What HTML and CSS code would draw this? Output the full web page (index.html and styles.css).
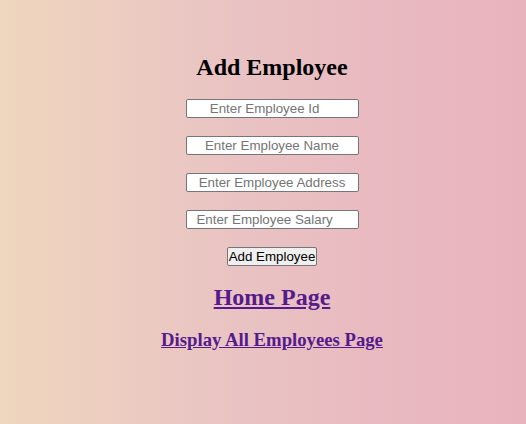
FILE: index.html
```html
<!DOCTYPE html>
<html>
<head>
<meta charset="utf-8">
<link rel="stylesheet" href="styles.css">
</head>
<body>
<div class="page">
  <h2 class="title">Add Employee</h2>
  <form class="form">
    <input class="field" type="text" placeholder="Enter Employee Id    ">
    <input class="field" type="text" placeholder="Enter Employee Name">
    <input class="field" type="text" placeholder="Enter Employee Address">
    <input class="field" type="text" placeholder="Enter Employee Salary    ">
    <button class="btn" type="button">Add Employee</button>
  </form>
  <h2 class="link-big"><a href="#">Home Page</a></h2>
  <h3 class="link-small"><a href="#">Display All Employees Page</a></h3>
</div>
</body>
</html>
```
FILE: styles.css
```css
html, body {
  height: 100%;
}
body {
  margin: 0;
  font-family: "Liberation Serif", "Times New Roman", serif;
  background: linear-gradient(to right, #efd6be 0%, #e9c3c3 45%, #e9b9c0 75%, #e9b3bd 100%);
}
.page {
  padding-top: 34px;
  padding-left: 18px;
  text-align: center;
}
.title {
  font-size: 24px;
  margin: 20px 0 18px;
}
.form {
  display: flex;
  flex-direction: column;
  align-items: center;
  gap: 18px;
}
.field {
  width: 173px;
  height: 19px;
  box-sizing: border-box;
  padding: 1px 2px;
  border: 1px solid #767676;
  border-radius: 2px;
  background: #fff;
  font-family: "Liberation Sans", Arial, sans-serif;
  font-size: 13.33px;
  text-align: center;
  white-space: pre;
}
.field::placeholder {
  color: #757575;
  white-space: pre;
}
.btn {
  height: 19px;
  padding: 0 1px;
  font-family: "Liberation Sans", Arial, sans-serif;
  font-size: 13.33px;
  color: #000;
  background: #efefef;
  border: 1px solid #767676;
  border-radius: 2px;
  line-height: 14px;
}
.link-big {
  font-size: 24px;
  margin: 18px 0;
}
.link-small {
  font-size: 18.72px;
  margin: 18px 0;
}
a {
  color: #551a8b;
}
```
